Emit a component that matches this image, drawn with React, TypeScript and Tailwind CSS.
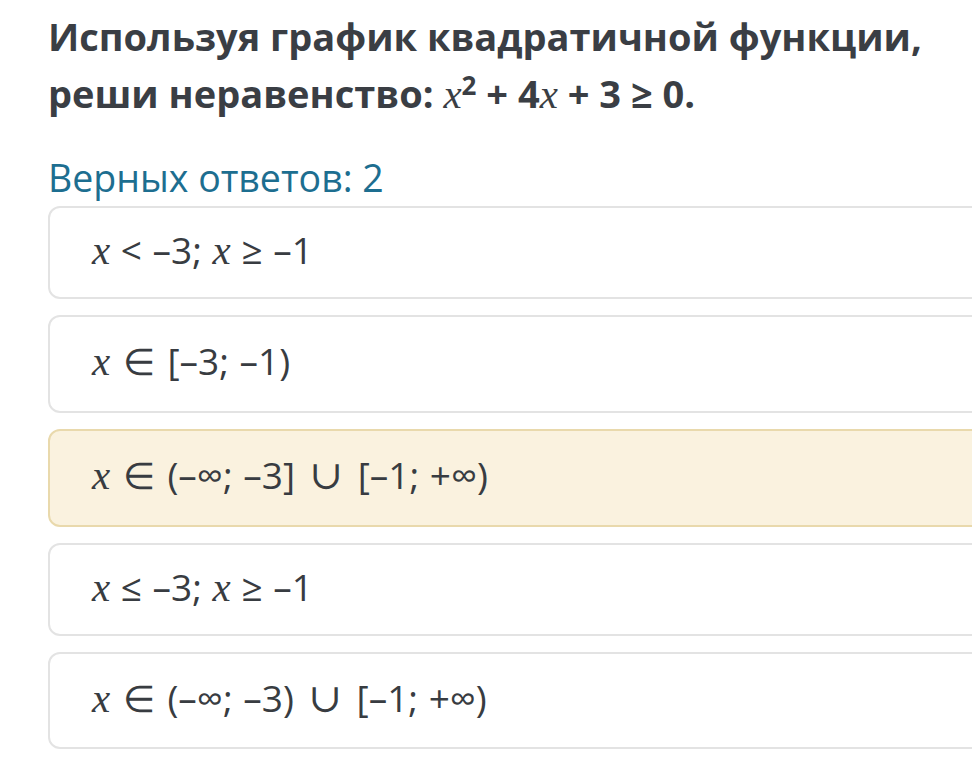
import React from "react";

const X = () => (
  <span style={{ fontFamily: '"Liberation Serif", serif' }} className="italic text-[41px] font-normal">x</span>
);
const U = () => (
  <span style={{ fontFamily: '"DejaVu Serif", serif' }} className="mx-[4px] text-[40px] font-light leading-none">∪</span>
);
const E = () => (
  <span style={{ fontFamily: '"DejaVu Sans", sans-serif', fontWeight: 200 }} className="mx-[2px] text-[37px]">∈</span>
);

const options: { content: React.ReactNode; selected?: boolean; h: string }[] = [
  { content: <><X /> &lt; –3; <X /> ≥ –1</>, h: "h-[93px]" },
  { content: <><X /> <E /> [–3; –1)</>, h: "h-[98px]" },
  { content: <><X /> <E /> (–∞; –3] <U /> [–1; +∞)</>, selected: true, h: "h-[98px]" },
  { content: <><X /> ≤ –3; <X /> ≥ –1</>, h: "h-[93px]" },
  { content: <><X /> <E /> (–∞; –3) <U /> [–1; +∞)</>, h: "h-[97px]" },
];

export default function App() {
  return (
    <div className="w-[972px] h-[764px] overflow-hidden bg-white" style={{ fontFamily: '"Open Sans", sans-serif' }}>
      <div className="pl-[48px] pt-[8px]">
        <h1 className="text-[38px] font-bold leading-[57px] text-[#3a3e44]">
          Используя график квадратичной функции,
          <br />
          реши неравенство: <span style={{ fontFamily: '"Liberation Serif", serif' }} className="italic font-normal text-[41px]">x</span>
          <sup className="text-[26px]">2</sup> + 4<span style={{ fontFamily: '"Liberation Serif", serif' }} className="italic font-normal text-[41px]">x</span> + 3 ≥ 0.
        </h1>
        <div className="mt-[33px] text-[37.5px] leading-[44px] text-[#1d6e90]">Верных ответов: 2</div>
        <div className="mt-[6px] flex flex-col gap-[16px] w-[960px]">
          {options.map((o, i) => (
            <div
              key={i}
              className={`${o.h} flex items-center pl-[42px] rounded-[12px] border-2 text-[37px] font-normal text-[#383c41] ${
                o.selected ? "bg-[#faf2df] border-[#e9d9ac]" : "bg-white border-[#e3e3e3]"
              }`}
            >
              <span className="-mt-[4px] whitespace-pre [word-spacing:1px]">{o.content}</span>
            </div>
          ))}
        </div>
      </div>
    </div>
  );
}
